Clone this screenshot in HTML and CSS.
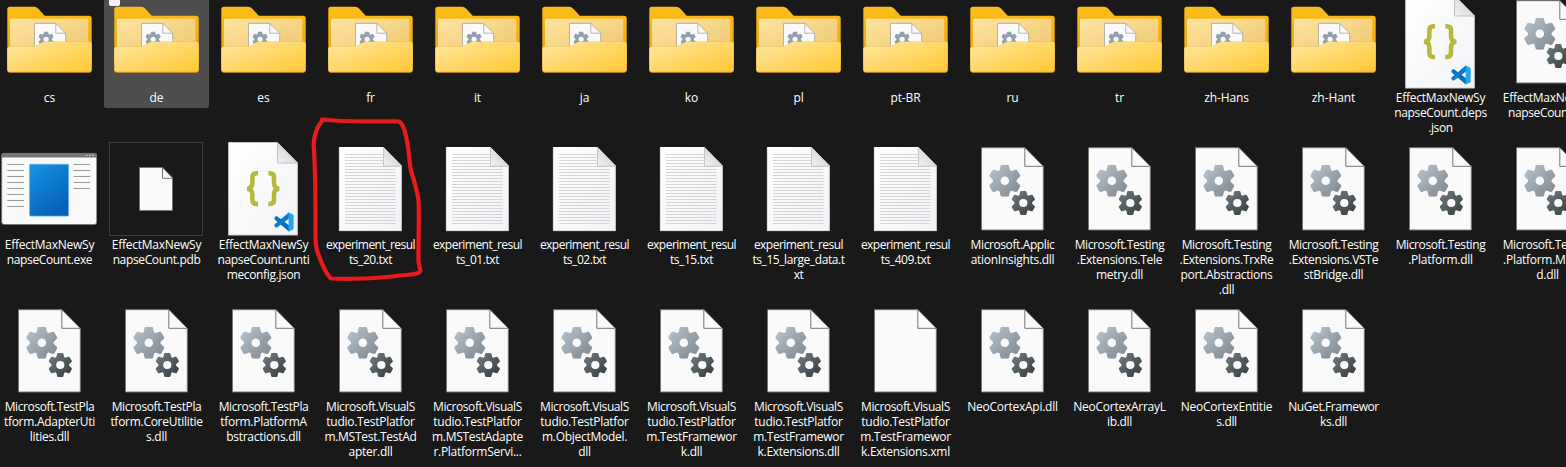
FILE: index.html
```html
<!DOCTYPE html>
<html lang="en">
<head>
<meta charset="utf-8">
<title>Files</title>
<link rel="stylesheet" href="styles.css">
</head>
<body>
<svg class="defs" width="0" height="0" aria-hidden="true">
  <defs>
    <linearGradient id="gBig" x1="0" y1="0" x2="1" y2="1"><stop offset="0" stop-color="#b8c5d0"/><stop offset="1" stop-color="#7e858d"/></linearGradient>
    <linearGradient id="gSmall" x1="0" y1="0" x2="1" y2="1"><stop offset="0" stop-color="#717f86"/><stop offset="1" stop-color="#35393b"/></linearGradient>
    <linearGradient id="gBack" x1="0" y1="0" x2="0" y2="1"><stop offset="0" stop-color="#fcbd1a"/><stop offset="1" stop-color="#eaa413"/></linearGradient>
    <linearGradient id="gInner" x1="0" y1="0" x2="1" y2="1"><stop offset="0" stop-color="#fde4a0"/><stop offset="1" stop-color="#efc66f"/></linearGradient>
    <linearGradient id="gFront" x1="0" y1="0" x2="1" y2="1"><stop offset="0" stop-color="#ffe7a0"/><stop offset="1" stop-color="#ffc933"/></linearGradient>
    <linearGradient id="gPage" x1="0" y1="0" x2="1" y2="1"><stop offset="0" stop-color="#ffffff"/><stop offset="1" stop-color="#f1f3f6"/></linearGradient>
    <linearGradient id="gFold" x1="0" y1="1" x2="1" y2="0"><stop offset="0" stop-color="#f4f4f4"/><stop offset="1" stop-color="#c6c6c6"/></linearGradient>
    <linearGradient id="gExe" x1="0" y1="0" x2="0.6" y2="1"><stop offset="0" stop-color="#1896e4"/><stop offset="1" stop-color="#0560b6"/></linearGradient>
  </defs>
  <symbol id="gear" viewBox="-16 -16 32 32">
    <path fill-rule="evenodd" d="M-4.2-15Q-3.8-16-2.8-16H2.8Q3.8-16 4.2-15L5.2-10.6 6.6-9.8 10.9-11.1Q12-11.3 12.6-10.4L15.3-5.7Q15.7-4.7 15-4L11.8-.9V.9L15 4Q15.7 4.7 15.3 5.7L12.6 10.4Q12 11.3 10.9 11.1L6.6 9.8 5.2 10.6 4.2 15Q3.8 16 2.8 16H-2.8Q-3.8 16-4.2 15L-5.2 10.6-6.6 9.8-10.9 11.1Q-12 11.3-12.6 10.4L-15.3 5.7Q-15.7 4.7-15 4L-11.8.9V-.9L-15-4Q-15.7-4.7-15.3-5.7L-12.6-10.4Q-12-11.3-10.9-11.1L-6.6-9.8-5.2-10.6ZM0-4.3A4.3 4.3 0 1 0 0 4.3A4.3 4.3 0 1 0 0-4.3Z"/>
  </symbol>
  <symbol id="xml" viewBox="0 0 96 96">
    <path d="M17.5 6.7H61L79.3 25.3V89H17.5Z" fill="#fafafa" stroke="#777572"/>
    <path d="M60.8 6.7V25.3H79.3" fill="none" stroke="#777572"/>
  </symbol>
  <symbol id="dll" viewBox="0 0 96 96">
    <use href="#xml" width="96" height="96"/>
    <use href="#gear" x="24.8" y="23.8" width="32" height="32" fill="url(#gBig)"/>
    <use href="#gear" x="47.3" y="50" width="24" height="24" fill="url(#gSmall)"/>
    <circle cx="59.3" cy="62" r="4.1" fill="#fafafa"/>
  </symbol>
  <symbol id="txt" viewBox="0 0 96 96">
    <path d="M17 6H61.3L79.7 24.7V90H17Z" fill="url(#gPage)"/>
    <path d="M17.3 90V6.3M79.4 25V89.7H17" fill="none" stroke="#c9c9c9" stroke-width=".7"/>
    <path d="M23 13.5H61.3M23 16.5H61.3M23 19.5H61.3M23 22.5H61.3M23 25.5H73.6M23 28.5H73.6M23 31.5H73.6M23 34.5H73.6M23 37.5H73.6M23 40.5H73.6M23 43.5H73.6M23 46.5H73.6M23 49.5H73.6M23 52.5H73.6M23 55.5H73.6M23 58.5H73.6M23 61.5H73.6M23 64.5H73.6M23 67.5H73.6M23 70.5H73.6M23 73.5H73.6M23 76.5H73.6M23 79.5H73.6M23 82.5H73.6" stroke="#d3d5d6"/>
    <path d="M61.3 6L79.7 24.7V25.3H61.3Z" fill="url(#gFold)"/>
    <path d="M61.5 6.4V25.2H79.6" fill="none" stroke="#b5b5b5" stroke-width=".7"/>
  </symbol>
  <symbol id="json" viewBox="0 0 96 96">
    <path d="M13.3 1.3H62.3L82.7 21.7V94.3H13.3Z" fill="url(#gPage)"/>
    <path d="M13.6 94V1.6M82.4 22V94H13.3" fill="none" stroke="#bdbdbd" stroke-width=".7"/>
    <path d="M62.3 1.3L82.7 21.7V22.2H62.3Z" fill="url(#gFold)"/>
    <path d="M62.5 1.7V22H82.6" fill="none" stroke="#b0b0b0" stroke-width=".7"/>
    <path d="M43 32.3H41.7Q37.4 32.3 37.4 36.3V42Q37.4 47.5 32 47.7Q37.4 48 37.4 53.400V59.1Q37.400 63.100 41.700 63.100H43M53.400 32.300H54.700Q59 32.300 59 36.300V42Q59 47.500 64.400 47.700Q59 48 59 53.400V59.100Q59 63.100 54.700 63.100H53.400" fill="none" stroke="#b7b73b" stroke-width="4.500"/>
    <path d="M59.5 76.6L60.8 75.3H62L78 87.3 73.5 90.2 59.5 78.2Z" fill="#0072bc"/>
    <path d="M59.5 85.2L60.8 86.5H62L78 74.6 73.5 71.7 59.5 83.6Z" fill="#0a7cc6"/>
    <path d="M73.3 71.7L78.2 74V88L73.3 90.2Q74 89.7 74 88.5V73.4Q74 72.2 73.3 71.7Z" fill="#25a6f0" stroke="#25a6f0" stroke-width=".8"/>
  </symbol>
  <symbol id="exe" viewBox="0 0 96 96">
    <rect x=".7" y="12.4" width="95.1" height="71.1" rx="2.4" fill="#fafafa" stroke="#777572" stroke-width=".9"/>
    <path d="M.3 16.6V14.6Q.3 12 3 12H93.5Q96.2 12 96.2 14.6V16.6Z" fill="#777572"/>
    <path d="M85 14.3H86.4M88.2 14.3H89.6M91.4 14.3H92.8" stroke="#d8d8d8" stroke-width="1.2"/>
    <path d="M6.3 23.5H23M6.3 29.5H23M6.3 35.5H23M6.3 41.5H23M6.3 47.5H23M6.3 53.5H23M6.3 59.5H23M6.3 65.5H23M72.7 23.5H89.3M72.7 29.5H89.3M72.7 35.5H89.3M72.7 41.5H89.3M72.7 47.5H89.3" stroke="#9b9b9b"/>
    <rect x="28.6" y="23.3" width="39" height="51.8" rx=".8" fill="url(#gExe)" stroke="#5db3ee" stroke-width=".8"/>
  </symbol>
  <symbol id="pdb" viewBox="0 0 96 96">
    <rect x="1.5" y="1.5" width="93" height="93" fill="none" stroke="#3d3d3d"/>
    <path d="M31.5 26.5H54.5L64.5 36.9V69.5H31.5Z" fill="#fafafa" stroke="#777572"/>
    <path d="M54.5 26.5V37.3H64.5" fill="none" stroke="#777572"/>
  </symbol>
  <symbol id="folder" viewBox="0 0 96 96">
    <path d="M6.3 15.5Q6.3 12.7 9 12.7H33Q35.5 12.7 37.3 14.7L43.7 21.7H88Q90.7 21.7 90.7 24.4V70H6.3Z" fill="url(#gBack)"/>
    <path d="M9 26Q9 24.7 10.3 24.7H86Q87.2 24.7 87.2 26V60H9Z" fill="url(#gInner)"/>
    <path d="M33.5 29.4H54.8L64.7 39.2V60H33.5Z" fill="#fafafa" stroke="#a9a49a" stroke-width=".8"/>
    <path d="M54.8 29.4V39.2H64.7" fill="none" stroke="#a9a49a" stroke-width=".8"/>
    <use href="#gear" x="37.3" y="37.5" width="15.6" height="15.6" fill="#91a0ac"/>
    <circle cx="45.1" cy="45.3" r="2.6" fill="#fafafa"/>
    <path d="M6.3 55.5Q6.3 52.7 9 52.7H31.5Q34.5 52.7 37 51L40.2 49Q42.2 47.7 45 47.7H88Q90.7 47.7 90.7 50.3V76Q90.7 78.8 88 78.8H9Q6.3 78.8 6.3 76Z" fill="#dfa32a"/>
    <path d="M6.3 55.5Q6.3 52.7 9 52.7H31.5Q34.5 52.7 37 51L40.2 49Q42.2 47.7 45 47.7H88Q90.7 47.7 90.7 50.3V75Q90.7 77.8 88 77.8H9Q6.3 77.8 6.3 75Z" fill="url(#gFront)"/>
  </symbol>
</svg>

<main class="files">
  <div class="item"><svg class="icon"><use href="#folder"/></svg><p class="name">cs</p></div>
  <div class="item item-hover"><span class="check"></span><svg class="icon"><use href="#folder"/></svg><p class="name">de</p></div>
  <div class="item"><svg class="icon"><use href="#folder"/></svg><p class="name">es</p></div>
  <div class="item"><svg class="icon"><use href="#folder"/></svg><p class="name">fr</p></div>
  <div class="item"><svg class="icon"><use href="#folder"/></svg><p class="name">it</p></div>
  <div class="item"><svg class="icon"><use href="#folder"/></svg><p class="name">ja</p></div>
  <div class="item"><svg class="icon"><use href="#folder"/></svg><p class="name">ko</p></div>
  <div class="item"><svg class="icon"><use href="#folder"/></svg><p class="name">pl</p></div>
  <div class="item"><svg class="icon"><use href="#folder"/></svg><p class="name">pt-BR</p></div>
  <div class="item"><svg class="icon"><use href="#folder"/></svg><p class="name">ru</p></div>
  <div class="item"><svg class="icon"><use href="#folder"/></svg><p class="name">tr</p></div>
  <div class="item"><svg class="icon"><use href="#folder"/></svg><p class="name">zh-Hans</p></div>
  <div class="item"><svg class="icon"><use href="#folder"/></svg><p class="name">zh-Hant</p></div>
  <div class="item"><svg class="icon"><use href="#json"/></svg><p class="name app">EffectMaxNewSy<br>napseCount.deps<br>.json</p></div>
  <div class="item"><svg class="icon"><use href="#dll"/></svg><p class="name app">EffectMaxNewSy<br>napseCount.dll</p></div>

  <div class="item"><svg class="icon"><use href="#exe"/></svg><p class="name app">EffectMaxNewSy<br>napseCount.exe</p></div>
  <div class="item"><svg class="icon"><use href="#pdb"/></svg><p class="name app">EffectMaxNewSy<br>napseCount.pdb</p></div>
  <div class="item"><svg class="icon"><use href="#json"/></svg><p class="name app">EffectMaxNewSy<br>napseCount.runti<br>meconfig.json</p></div>
  <div class="item"><svg class="icon"><use href="#txt"/></svg><p class="name result">experiment_resul<br>ts_20.txt</p></div>
  <div class="item"><svg class="icon"><use href="#txt"/></svg><p class="name result">experiment_resul<br>ts_01.txt</p></div>
  <div class="item"><svg class="icon"><use href="#txt"/></svg><p class="name result">experiment_resul<br>ts_02.txt</p></div>
  <div class="item"><svg class="icon"><use href="#txt"/></svg><p class="name result">experiment_resul<br>ts_15.txt</p></div>
  <div class="item"><svg class="icon"><use href="#txt"/></svg><p class="name result">experiment_resul<br>ts_15_large_data.t<br>xt</p></div>
  <div class="item"><svg class="icon"><use href="#txt"/></svg><p class="name result">experiment_resul<br>ts_409.txt</p></div>
  <div class="item"><svg class="icon"><use href="#dll"/></svg><p class="name lib">Microsoft.Applic<br>ationInsights.dll</p></div>
  <div class="item"><svg class="icon"><use href="#dll"/></svg><p class="name lib">Microsoft.Testing<br>.Extensions.Tele<br>metry.dll</p></div>
  <div class="item"><svg class="icon"><use href="#dll"/></svg><p class="name lib">Microsoft.Testing<br>.Extensions.TrxRe<br>port.Abstractions<br>.dll</p></div>
  <div class="item"><svg class="icon"><use href="#dll"/></svg><p class="name lib">Microsoft.Testing<br>.Extensions.VSTe<br>stBridge.dll</p></div>
  <div class="item"><svg class="icon"><use href="#dll"/></svg><p class="name lib">Microsoft.Testing<br>.Platform.dll</p></div>
  <div class="item"><svg class="icon"><use href="#dll"/></svg><p class="name lib">Microsoft.Testing<br>.Platform.MSBuil<br>d.dll</p></div>

  <div class="item"><svg class="icon"><use href="#dll"/></svg><p class="name lib">Microsoft.TestPla<br>tform.AdapterUti<br>lities.dll</p></div>
  <div class="item"><svg class="icon"><use href="#dll"/></svg><p class="name lib">Microsoft.TestPla<br>tform.CoreUtilitie<br>s.dll</p></div>
  <div class="item"><svg class="icon"><use href="#dll"/></svg><p class="name lib">Microsoft.TestPla<br>tform.PlatformA<br>bstractions.dll</p></div>
  <div class="item"><svg class="icon"><use href="#dll"/></svg><p class="name lib">Microsoft.VisualS<br>tudio.TestPlatfor<br>m.MSTest.TestAd<br>apter.dll</p></div>
  <div class="item"><svg class="icon"><use href="#dll"/></svg><p class="name lib">Microsoft.VisualS<br>tudio.TestPlatfor<br>m.MSTestAdapte<br>r.PlatformServi...</p></div>
  <div class="item"><svg class="icon"><use href="#dll"/></svg><p class="name lib">Microsoft.VisualS<br>tudio.TestPlatfor<br>m.ObjectModel.<br>dll</p></div>
  <div class="item"><svg class="icon"><use href="#dll"/></svg><p class="name lib">Microsoft.VisualS<br>tudio.TestPlatfor<br>m.TestFramewor<br>k.dll</p></div>
  <div class="item"><svg class="icon"><use href="#dll"/></svg><p class="name lib">Microsoft.VisualS<br>tudio.TestPlatfor<br>m.TestFramewor<br>k.Extensions.dll</p></div>
  <div class="item"><svg class="icon"><use href="#xml"/></svg><p class="name lib">Microsoft.VisualS<br>tudio.TestPlatfor<br>m.TestFramewor<br>k.Extensions.xml</p></div>
  <div class="item"><svg class="icon"><use href="#dll"/></svg><p class="name app">NeoCortexApi.dll</p></div>
  <div class="item"><svg class="icon"><use href="#dll"/></svg><p class="name app">NeoCortexArrayL<br>ib.dll</p></div>
  <div class="item"><svg class="icon"><use href="#dll"/></svg><p class="name app">NeoCortexEntitie<br>s.dll</p></div>
  <div class="item"><svg class="icon"><use href="#dll"/></svg><p class="name lib">NuGet.Framewor<br>ks.dll</p></div>
</main>

<svg class="marker" viewBox="310 112 120 175" aria-hidden="true">
  <path d="M322 119.500C335 121 350 121.400 365 121.400C380 121.400 390 121.300 398 121.300C402 122 403 126 405 132C409 146 409 160 411 171C414 180 417 190 418.500 200C419.500 222 418 245 418.500 262L420.500 271C418 275 410 274.500 400 275.500C380 278.500 350 279.500 331 278.500C326 274 323 267 319 256C315 247 315.500 240 315.500 225C315.500 200 315.500 175 314 150C312.500 138 317 126 323 120"/>
</svg>
</body>
</html>
```
FILE: styles.css
```css
body {
  margin: 0;
  width: 1566px;
  height: 467px;
  overflow: hidden;
  background: #191919;
  color: #fff;
  font: 12px/15px "Open Sans", "Noto Sans", sans-serif;
}

.defs {
  display: block;
}

.files {
  display: grid;
  grid-template-columns: repeat(15, 105px);
  grid-template-rows: 147px 162px 164px;
  column-gap: 2px;
  align-items: start;
  margin: -6px 0 0 -3px;
}

.item {
  position: relative;
  padding-bottom: 3px;
}

.item-hover {
  background: #4d4d4d;
  border-radius: 2px;
}

.icon {
  display: block;
  width: 96px;
  height: 96px;
  margin-left: 4px;
}

.check {
  position: absolute;
  left: 5px;
  top: 0;
  width: 11px;
  height: 12px;
  border-radius: 2px;
  background: #f3f3f3;
}

.name {
  margin: 0;
  text-align: center;
  white-space: nowrap;
  letter-spacing: -0.1px;
}

/* Tighter tracking for the long names */
.app {
  letter-spacing: -0.36px;
}

.app::first-line {
  letter-spacing: -0.25px;
}

.lib {
  letter-spacing: -0.28px;
}

.lib::first-line {
  letter-spacing: -0.4px;
}

.result {
  letter-spacing: -0.42px;
}

.result::first-line {
  letter-spacing: -0.52px;
}

.marker {
  position: absolute;
  left: 310px;
  top: 112px;
  width: 120px;
  height: 175px;
  fill: none;
  stroke: #e81a1c;
  stroke-width: 4.2;
  stroke-linecap: round;
  stroke-linejoin: round;
}
```
